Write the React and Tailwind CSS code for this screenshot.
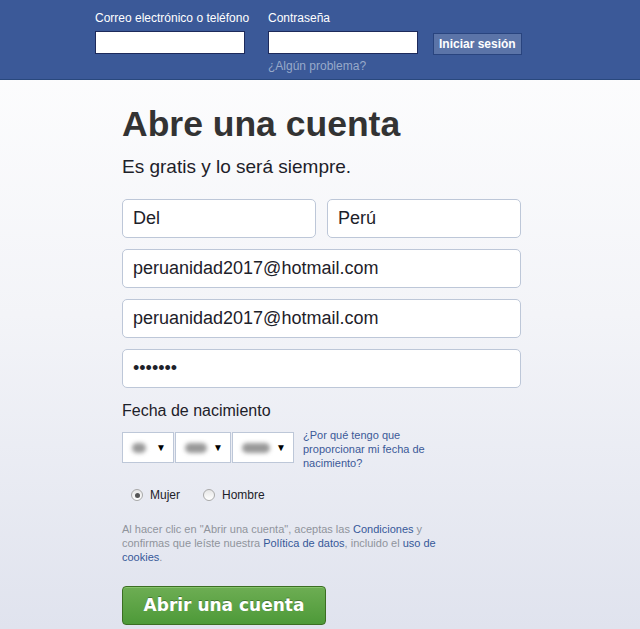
import React from "react";

const field =
  "h-[39px] w-full rounded-[5px] border border-[#bdc7d8] bg-white px-[10px] text-[18px] text-[#1d2129] outline-none";

function BlurSelect({ w, blob }) {
  return (
    <div
      className="flex h-[31px] items-center justify-between border border-[#bdc7d8] bg-white pl-[9px] pr-[7px]"
      style={{ width: w }}
    >
      <span className="h-[10px] rounded-full bg-[#999] blur-[2px]" style={{ width: blob }} />
      <span className="text-[10px] text-black">▼</span>
    </div>
  );
}

function Radio({ checked, label }) {
  return (
    <label className="flex items-center gap-[7px]">
      <span className="flex h-[12px] w-[12px] items-center justify-center rounded-full border border-[#a9a9a9] bg-gradient-to-b from-[#e6e6e6] to-white">
        {checked && <span className="h-[5px] w-[5px] rounded-full bg-[#555]" />}
      </span>
      <span>{label}</span>
    </label>
  );
}

export default function App() {
  return (
    <div className="min-h-[629px] font-['Liberation_Sans',Arial,sans-serif] bg-gradient-to-b from-white via-[#f3f4f8] to-[#e0e3ee]">
      {/* Header */}
      <div className="h-[80px] border-b border-[#29487d] bg-[#3b5998]">
        <div className="flex gap-[23px] pl-[95px] pt-[11px]">
          <div className="flex w-[150px] flex-col">
            <span className="text-[12px] leading-[14px] text-white whitespace-nowrap">Correo electrónico o teléfono</span>
            <div className="mt-[6px] h-[23px] border border-[#1d2a5b] bg-white" />
          </div>
          <div className="flex w-[150px] flex-col">
            <span className="text-[12px] leading-[14px] text-white">Contraseña</span>
            <div className="mt-[6px] h-[23px] border border-[#1d2a5b] bg-white" />
            <span className="mt-[5px] text-[12px] leading-[14px] text-[#98a9ca]">¿Algún problema?</span>
          </div>
          <div className="-ml-[8px] pt-[20px]">
            <button className="-mt-[2px] h-[22px] border border-[#29447e] bg-[#5b74a8] px-[5px] text-[12px] font-bold text-white">
              Iniciar sesión
            </button>
          </div>
        </div>
      </div>

      {/* Registration */}
      <div className="ml-[122px] w-[399px] pt-[22px] text-[#1d2129]">
        <h1 className="text-[35.5px] font-bold leading-[44px] text-[#333]">Abre una cuenta</h1>
        <p className="mt-[9px] text-[19px] leading-[24px]">Es gratis y lo será siempre.</p>

        <div className="mt-[20px] flex flex-col gap-[11px]">
          <div className="flex gap-[11px]">
            <input className={field} defaultValue="Del" />
            <input className={field} defaultValue="Perú" />
          </div>
          <input className={field} defaultValue="peruanidad2017@hotmail.com" />
          <input className={field} defaultValue="peruanidad2017@hotmail.com" />
          <input className={field} type="password" defaultValue="1234567" />
        </div>

        <div className="mt-[13px] text-[16px] leading-[20px]">Fecha de nacimiento</div>
        <div className="mt-[11px] flex items-start">
          <div className="flex gap-[1px]">
            <BlurSelect w={52} blob={14} />
            <BlurSelect w={56} blob={22} />
            <BlurSelect w={62} blob={28} />
          </div>
          <a className="ml-[9px] -mt-[4px] w-[130px] text-[11px] leading-[14px] text-[#3b5998]">
            ¿Por qué tengo que proporcionar mi fecha de nacimiento?
          </a>
        </div>

        <div className="mt-[16px] flex gap-[23px] pl-[9px] text-[12px] text-[#1d2129]">
          <Radio checked label="Mujer" />
          <Radio label="Hombre" />
        </div>

        <p className="mt-[18px] w-[322px] text-[11px] leading-[14px] text-[#90949c]">
          Al hacer clic en "Abrir una cuenta", aceptas las <a className="text-[#365899]">Condiciones</a> y
          confirmas que leíste nuestra <a className="text-[#365899]">Política de datos</a>, incluido el{" "}
          <a className="text-[#365899]">uso de cookies</a>.
        </p>

        <button className="mt-[22px] h-[39px] w-[204px] rounded-[4px] border border-[#3b6e22] bg-gradient-to-b from-[#6dad53] to-[#4d9a38] font-['DejaVu_Sans',sans-serif] text-[17px] font-bold text-white [text-shadow:0_-1px_0_rgba(0,0,0,0.3)] shadow-[inset_0_1px_0_#86c36b]">
          Abrir una cuenta
        </button>
      </div>
    </div>
  );
}
